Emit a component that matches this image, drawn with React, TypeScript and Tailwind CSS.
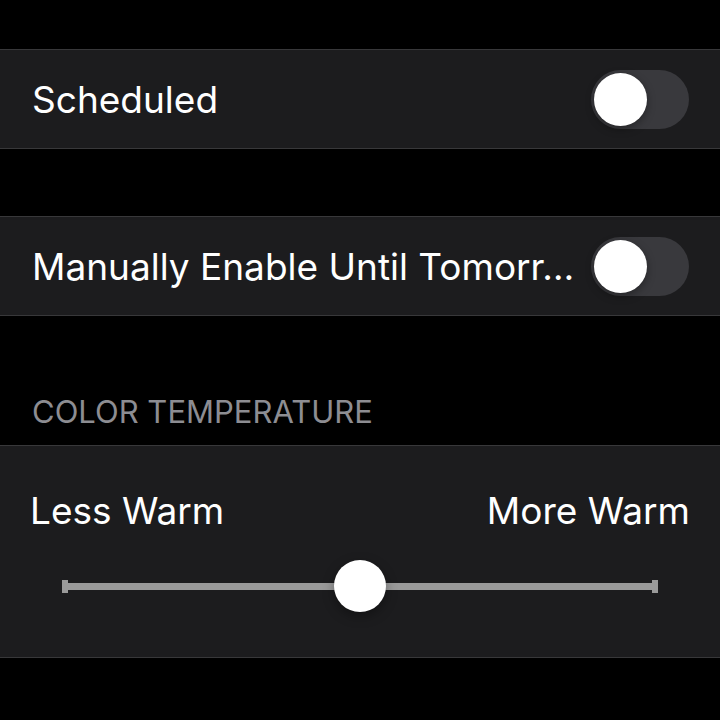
import React from "react";

function Toggle() {
  return (
    <div className="w-[98px] h-[59px] rounded-full bg-[#39393d] p-[3px] flex items-center">
      <div className="w-[53px] h-[53px] rounded-full bg-white shadow-[0_3px_8px_rgba(0,0,0,0.35)]" />
    </div>
  );
}

function ToggleRow({ label }: { label: string }) {
  return (
    <div className="h-[100px] bg-[#1c1c1e] border-y border-[#38383a] flex items-center justify-between pl-[32px] pr-[31px]">
      <span className="text-[37px] text-white whitespace-nowrap pt-[2px]">{label}</span>
      <div className="shrink-0 ml-[10px]">
        <Toggle />
      </div>
    </div>
  );
}

export default function App() {
  return (
    <div
      className="w-[720px] h-[720px] bg-black overflow-hidden"
      style={{ fontFamily: "Inter, 'Noto Sans', sans-serif" }}
    >
      <div className="h-[49px]" />
      <ToggleRow label="Scheduled" />
      <div className="h-[67px]" />
      <ToggleRow label="Manually Enable Until Tomorr…" />
      <div className="h-[129px] flex items-end pl-[32px] pb-[18px]">
        <span className="text-[31px] text-[#8d8d92] uppercase leading-none">Color Temperature</span>
      </div>
      <div className="h-[213px] bg-[#1c1c1e] border-y border-[#38383a] px-[30px] pt-[46px]">
        <div className="flex justify-between text-[37px] text-white leading-none">
          <span>Less Warm</span>
          <span>More Warm</span>
        </div>
        <div className="relative mx-[32px] mt-[31px] h-[52px] flex items-center">
          <div className="w-[6px] h-[13px] bg-[#9a9a9a]" />
          <div className="flex-1 h-[7px] bg-[#9a9a9a]" />
          <div className="w-[6px] h-[13px] bg-[#9a9a9a]" />
          <div className="absolute left-[272px] top-0 w-[52px] h-[52px] rounded-full bg-white shadow-[0_4px_12px_rgba(0,0,0,0.35)]" />
        </div>
      </div>
    </div>
  );
}
